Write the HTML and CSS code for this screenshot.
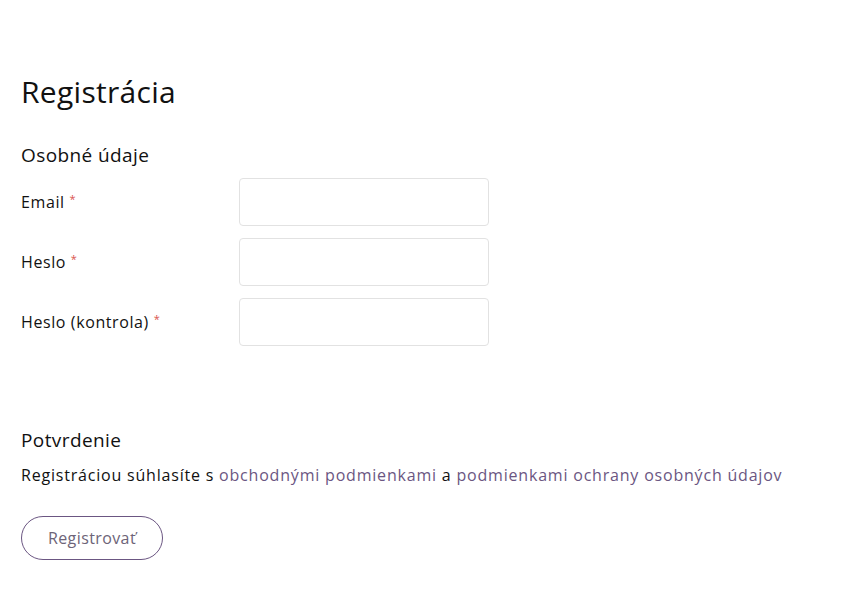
FILE: index.html
```html
<!DOCTYPE html>
<html lang="sk">
<head>
<meta charset="utf-8">
<title>Registrácia</title>
<link rel="stylesheet" href="styles.css">
</head>
<body>
<main class="page">
  <h1 class="title">Registrácia</h1>
  <form class="form">
    <h2 class="section-title">Osobné údaje</h2>
    <div class="rows">
      <div class="row">
        <label class="label">Email <span class="req">*</span></label>
        <input class="input" type="email">
      </div>
      <div class="row">
        <label class="label">Heslo <span class="req">*</span></label>
        <input class="input" type="password">
      </div>
      <div class="row">
        <label class="label">Heslo (kontrola) <span class="req">*</span></label>
        <input class="input" type="password">
      </div>
    </div>
    <h2 class="section-title confirm">Potvrdenie</h2>
    <p class="terms">Registráciou súhlasíte s <a href="#" class="link">obchodnými podmienkami</a> a <a href="#" class="link">podmienkami ochrany osobných údajov</a></p>
    <button type="button" class="btn">Registrovať</button>
  </form>
</main>
</body>
</html>
```
FILE: styles.css
```css
html, body {
  margin: 0;
  padding: 0;
  background: #fff;
}
body {
  font-family: "Open Sans", Lato, sans-serif;
  color: #111;
  letter-spacing: 0.4px;
}
.page {
  padding: 74px 21px 0;
}
.title {
  margin: 0;
  font-size: 30px;
  font-weight: 400;
  line-height: 36px;
  color: #111;
  letter-spacing: 0.3px;
}
.form {
  margin-top: 33px;
}
.section-title {
  margin: 0;
  font-size: 19px;
  font-weight: 400;
  line-height: 24px;
}
.rows {
  margin-top: 11px;
  display: flex;
  flex-direction: column;
  gap: 12px;
}
.row {
  display: flex;
  align-items: center;
}
.label {
  width: 218px;
  font-size: 16px;
  letter-spacing: 0.6px;
}
.req {
  color: #d9534f;
  font-size: 11px;
  vertical-align: 5px;
}
.input {
  box-sizing: border-box;
  width: 250px;
  height: 48px;
  border: 1px solid #e2e2e2;
  border-radius: 4px;
  margin: 0;
}
.confirm {
  margin-top: 82px;
}
.terms {
  margin: 12px 0 0;
  font-size: 16px;
  line-height: 22px;
  letter-spacing: 0.8px;
}
.link {
  color: #6b5682;
  text-decoration: none;
}
.btn {
  margin-top: 30px;
  width: 142px;
  height: 44px;
  border: 1px solid #6b5682;
  border-radius: 22px;
  background: #fff;
  color: #6d6478;
  font-family: inherit;
  font-size: 16px;
  letter-spacing: 0.4px;
}
```
